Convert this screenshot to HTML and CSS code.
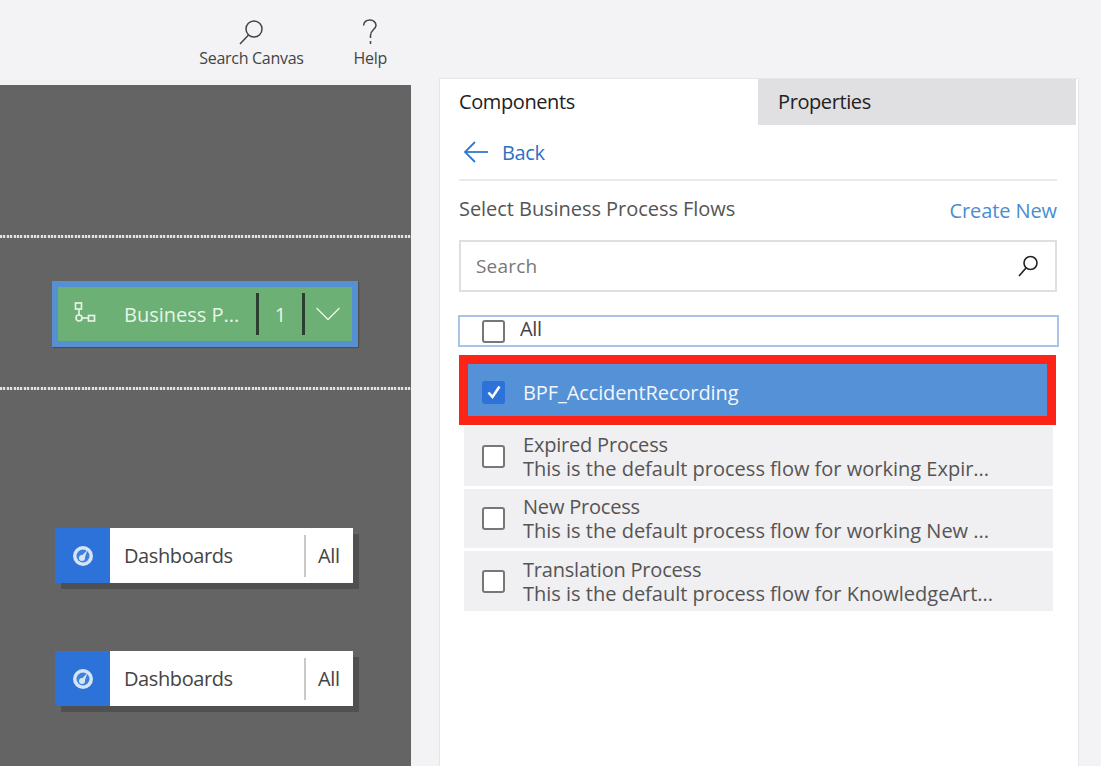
FILE: index.html
```html
<!DOCTYPE html>
<html>
	<head>
		<meta charset="utf-8" />
		<title>Business Process Flows</title>
		<link rel="stylesheet" href="styles.css">
	</head>
	<body>
		<div class="page">
			<div class="left">
				<div class="toolbar">
					<div class="tool tool-search">
						<svg width="28" height="26" viewBox="0 0 28 26" fill="none" stroke="#444" stroke-width="1.500"><circle cx="17" cy="10" r="8"/><path d="M11.500 16 L3 25"/></svg>
						<span>Search Canvas</span>
					</div>
					<div class="tool tool-help">
						<svg width="20" height="26" viewBox="0 0 20 26" fill="none" stroke="#444" stroke-width="1.500"><path d="M3.500 6.500 C4 2.500 7 1 10 1 C13.500 1 16 3.500 16 6.500 C16 10 10.500 11 10.500 16.500 V19"/><path d="M10.500 22 V25"/></svg>
						<span>Help</span>
					</div>
				</div>
				<div class="canvas">
					<div class="dots dots-first"></div>
					<div class="node node-bpf">
						<svg class="bpf-icon" width="24" height="24" viewBox="0 0 24 24" fill="none" stroke="#e6f3e6" stroke-width="1.700"><rect x="2.500" y="1" width="6" height="6"/><path d="M6 7 V13"/><circle cx="6" cy="16" r="3"/><path d="M9 16 H15"/><rect x="15.500" y="13.500" width="6" height="5.500"/></svg>
						<span class="bpf-name">Business P...</span>
						<span class="bpf-sep"></span>
						<span class="bpf-count">1</span>
						<span class="bpf-sep"></span>
						<svg class="bpf-chevron" width="24" height="14" viewBox="0 0 24 14" fill="none" stroke="#e6f3e6" stroke-width="1.500"><path d="M0.500 1 L12 12.500 L23.500 1"/></svg>
					</div>
					<div class="dots dots-second"></div>
					<div class="node node-dash node-dash-first">
						<div class="dash-icon">
							<svg width="22" height="22" viewBox="0 0 22 22"><circle cx="11" cy="11" r="10" fill="#d5e5f8"/><circle cx="11" cy="11" r="6.500" fill="#3f80dc"/><circle cx="10" cy="13" r="3" fill="#d5e5f8"/><path d="M8.500 12 L15.500 5 L12 14.500 Z" fill="#d5e5f8"/></svg>
						</div>
						<span class="dash-name">Dashboards</span>
						<span class="dash-sep"></span>
						<span class="dash-all">All</span>
					</div>
					<div class="node node-dash node-dash-second">
						<div class="dash-icon">
							<svg width="22" height="22" viewBox="0 0 22 22"><circle cx="11" cy="11" r="10" fill="#d5e5f8"/><circle cx="11" cy="11" r="6.500" fill="#3f80dc"/><circle cx="10" cy="13" r="3" fill="#d5e5f8"/><path d="M8.500 12 L15.500 5 L12 14.500 Z" fill="#d5e5f8"/></svg>
						</div>
						<span class="dash-name">Dashboards</span>
						<span class="dash-sep"></span>
						<span class="dash-all">All</span>
					</div>
				</div>
			</div>
			<div class="panel">
				<div class="tabs">
					<div class="tab tab-active">Components</div>
					<div class="tab">Properties</div>
				</div>
				<div class="panel-body">
					<div class="back">
						<svg width="26" height="24" viewBox="0 0 26 24" fill="none" stroke="#2f7ad0" stroke-width="1.800"><path d="M25 12 H2"/><path d="M12 2 L2 12 L12 22"/></svg>
						<span>Back</span>
					</div>
					<div class="select-head">
						<span class="select-title">Select Business Process Flows</span>
						<span class="create-new">Create New</span>
					</div>
					<div class="search">
						<span>Search</span>
						<svg width="24" height="24" viewBox="0 0 24 24" fill="none" stroke="#222" stroke-width="1.600"><circle cx="14.500" cy="9" r="6.500"/><path d="M10 14 L3 22"/></svg>
					</div>
					<div class="all-row">
						<span class="check"></span>
						<span class="all-label">All</span>
					</div>
					<div class="selected-row">
						<span class="check check-on">
							<svg width="16" height="16" viewBox="0 0 16 16" fill="none" stroke="#fff" stroke-width="2.600"><path d="M2.500 8.500 L6.500 13 L13.500 2.500"/></svg>
						</span>
						<span class="selected-label">BPF_AccidentRecording</span>
					</div>
					<div class="row">
						<span class="check"></span>
						<div class="row-text">
							<div class="row-title">Expired Process</div>
							<div>This is the default process flow for working Expir...</div>
						</div>
					</div>
					<div class="row">
						<span class="check"></span>
						<div class="row-text">
							<div class="row-title">New Process</div>
							<div>This is the default process flow for working New ...</div>
						</div>
					</div>
					<div class="row">
						<span class="check"></span>
						<div class="row-text">
							<div class="row-title">Translation Process</div>
							<div>This is the default process flow for KnowledgeArt...</div>
						</div>
					</div>
				</div>
			</div>
		</div>
	</body>
</html>
```

FILE: styles.css
```css
html, body {
	margin: 0;
	height: 100%;
	overflow: hidden;
}
body {
	background: #f3f2f5;
	font-family: "Open Sans", "Noto Sans", sans-serif;
	color: #444;
}
.page {
	display: flex;
	height: 766px;
}

/* left side */
.left {
	width: 411px;
	display: flex;
	flex-direction: column;
}
.toolbar {
	height: 85px;
	flex: none;
	display: flex;
	justify-content: flex-end;
	box-sizing: border-box;
	padding: 19px 24px 0 0;
}
.tool {
	display: flex;
	flex-direction: column;
	align-items: center;
	font-size: 16px;
	line-height: 22px;
	color: #444;
	letter-spacing: -0.3px;
}
.tool svg {
	display: block;
	margin-bottom: 2px;
}
.tool-help {
	margin-left: 50px;
}
.canvas {
	flex: 1;
	background: #646464;
	display: flex;
	flex-direction: column;
	align-items: flex-start;
}
.dots {
	width: 100%;
	height: 3px;
	background: repeating-linear-gradient(90deg, #e2e2e2 0, #e2e2e2 2px, #7d7d7d 2px, #7d7d7d 3.4px);
}
.dots-first { margin-top: 150px; }
.dots-second { margin-top: 40px; }
.node {
	display: flex;
	align-items: center;
	box-sizing: border-box;
}
.node-bpf {
	margin: 43px 0 0 52px;
	width: 306px;
	height: 66px;
	background: #6cb075;
	border: 6px solid #5690d2;
	color: #e8f5e8;
	font-size: 20px;
	box-shadow: 1px 1px 1px #4f4f4f;
}
.bpf-icon { margin-left: 15px; }
.bpf-name {
	margin-left: 27px;
	width: 132px;
	white-space: nowrap;
}
.bpf-sep {
	width: 3px;
	height: 42px;
	background: #2d3d30;
}
.bpf-count {
	width: 43px;
	text-align: center;
}
.bpf-chevron { margin-left: 11px; }
.node-dash {
	width: 298px;
	height: 55px;
	background: #fff;
	color: #444;
	font-size: 20px;
	box-shadow: 6px 6px 0 #505050;
	letter-spacing: -0.4px;
}
.node-dash-first { margin: 138px 0 0 55px; }
.node-dash-second { margin: 68px 0 0 55px; }
.dash-icon {
	width: 55px;
	height: 100%;
	background: #2c72d8;
	display: flex;
	align-items: center;
	justify-content: center;
	flex: none;
}
.dash-name {
	margin-left: 14px;
	width: 180px;
}
.dash-sep {
	width: 2px;
	height: 42px;
	background: #c9c9c9;
}
.dash-all { margin-left: 12px; }

/* right panel */
.panel {
	width: 640px;
	height: 688px;
	margin: 78px 0 0 28px;
	box-sizing: border-box;
	background: #fff;
	border: 1px solid #e6e6e8;
	border-bottom: 0;
}
.tabs {
	display: flex;
	height: 46px;
	margin-right: 2px;
}
.tab {
	flex: 1;
	font-size: 20px;
	line-height: 46px;
	padding-left: 20px;
	color: #222;
	background: #e0dfe2;
	letter-spacing: -0.4px;
}
.tab-active {
	flex: none;
	width: 299px;
	padding-left: 19px;
	background: #fff;
}
.panel-body {
	padding: 0 21px 0 19px;
	font-size: 20px;
}
.back {
	height: 56px;
	display: flex;
	align-items: center;
	color: #2d6fc4;
	border-bottom: 2px solid #eaeae6;
	padding-left: 4px;
	box-sizing: border-box;
	letter-spacing: -0.4px;
}
.back svg { margin-right: 13px; }
.select-head {
	display: flex;
	justify-content: space-between;
	margin-top: 12px;
	height: 47px;
}
.select-title {
	color: #555;
	line-height: 32px;
	letter-spacing: -0.05px;
}
.create-new {
	color: #4a8dd0;
	line-height: 36px;
	letter-spacing: -0.1px;
}
.search {
	height: 52px;
	box-sizing: border-box;
	border: 2px solid #dfdfdf;
	display: flex;
	align-items: center;
	justify-content: space-between;
	padding: 0 15px;
	color: #777;
	font-size: 19px;
	letter-spacing: 0.2px;
}
.all-row {
	height: 32px;
	margin: 23px 0 0 -1px;
	width: 601px;
	box-sizing: border-box;
	border: 2px solid #a9c5e4;
	display: flex;
	align-items: center;
	padding-left: 22px;
	color: #444;
	letter-spacing: -0.4px;
}
.all-label {
	margin: -5px 0 0 15px;
}
.check {
	width: 23px;
	height: 23px;
	flex: none;
	box-sizing: border-box;
	border: 2px solid #777;
	border-radius: 3px;
	background: #fff;
	display: flex;
	align-items: center;
	justify-content: center;
}
.check-on {
	background: #2c72d8;
	border-color: #2c72d8;
}
.selected-row {
	margin-top: 8px;
	height: 70px;
	box-sizing: border-box;
	border: 9px solid #fb2416;
	background: #5591d6;
	display: flex;
	align-items: center;
	padding: 4px 0 0 14px;
	color: #f2f6fb;
	width: 597px;
	letter-spacing: -0.1px;
}
.selected-label { margin-left: 18px; }
.row {
	margin: 2px 4px 0 5px;
	height: 59px;
	background: #f0eff1;
	display: flex;
	align-items: center;
	padding-left: 18px;
	color: #555;
}
.row + .row { margin-top: 3px; }
.row:last-child { height: 60px; }
.row-text {
	margin-left: 18px;
	padding-top: 1px;
	line-height: 24px;
	white-space: nowrap;
}
.row-title { letter-spacing: -0.2px; }
```
